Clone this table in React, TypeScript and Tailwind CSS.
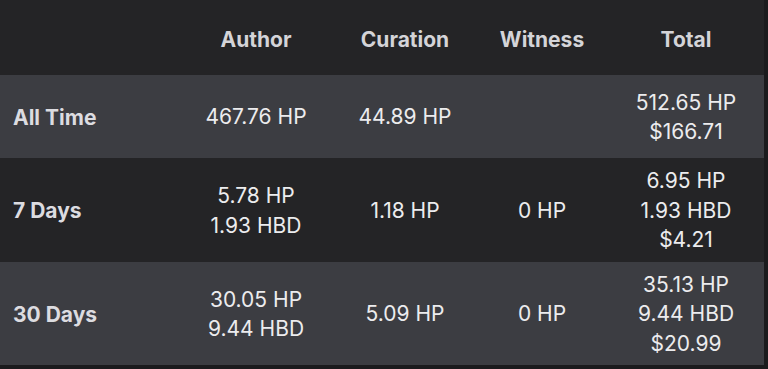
import React from "react";

type Row = {
  label: string;
  h: string;
  bg: string;
  cells: string[][];
};

const rows: Row[] = [
  {
    label: "All Time",
    h: "h-[83px]",
    bg: "bg-[#3c3d42]",
    cells: [["467.76 HP"], ["44.89 HP"], [], ["512.65 HP", "$166.71"]],
  },
  {
    label: "7 Days",
    h: "h-[104px]",
    bg: "bg-[#242426]",
    cells: [["5.78 HP", "1.93 HBD"], ["1.18 HP"], ["0 HP"], ["6.95 HP", "1.93 HBD", "$4.21"]],
  },
  {
    label: "30 Days",
    h: "h-[103px]",
    bg: "bg-[#3c3d42]",
    cells: [["30.05 HP", "9.44 HBD"], ["5.09 HP"], ["0 HP"], ["35.13 HP", "9.44 HBD", "$20.99"]],
  },
];

const cols = "grid grid-cols-[178px_156px_142px_132px_156px]";

export default function App() {
  return (
    <div
      className="w-[768px] h-[369px] bg-[#1b1b1d] overflow-hidden"
      style={{ fontFamily: "Inter, 'Liberation Sans', sans-serif" }}
    >
      <div className="w-[764px] bg-[#242426]">
        <div className={`${cols} h-[75px] items-center pt-[4px] text-[21px] font-bold text-[#d4d4d8]`}>
          <div />
          <div className="text-center">Author</div>
          <div className="text-center">Curation</div>
          <div className="text-center">Witness</div>
          <div className="text-center">Total</div>
        </div>
        {rows.map((r) => (
          <div key={r.label} className={`${cols} ${r.h} ${r.bg} items-center`}>
            <div className="pl-[13px] pt-[2px] text-[21px] font-bold text-[#dcdce0]">{r.label}</div>
            {r.cells.map((c, i) => (
              <div key={i} className="flex flex-col items-center pt-[1px] text-[21px] leading-[29.5px] text-[#ececee]">
                {c.map((t) => (
                  <span key={t}>{t}</span>
                ))}
              </div>
            ))}
          </div>
        ))}
      </div>
    </div>
  );
}
